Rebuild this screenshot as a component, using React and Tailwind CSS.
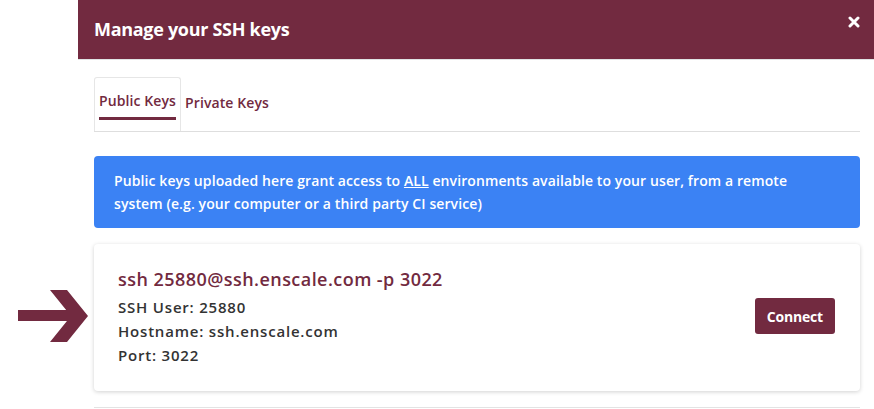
import React from 'react';

const FONT = { fontFamily: '"Open Sans", "Noto Sans", sans-serif' };

const ArrowMark = () => (
    <svg width="70" height="52" viewBox="0 0 70 52" className="shrink-0">
        <rect x="0" y="20" width="58" height="11" fill="#722a40" />
        <polygon points="32,0 49,0 70,26 49,52 32,52 53,26" fill="#722a40" />
    </svg>
);

const CloseIcon = () => (
    <svg width="12" height="12" viewBox="0 0 12 12">
        <path d="M2 2 L10 10 M10 2 L2 10" stroke="#fff" strokeWidth="3" strokeLinecap="round" />
    </svg>
);

export default function App() {
    return (
        <div className="w-[874px] h-[409px] overflow-hidden bg-white flex" style={FONT}>
            {/* left gutter with pointer arrow */}
            <div className="w-[78px] shrink-0 flex flex-col">
                <div className="h-[290px]" />
                <div className="pl-[18px]">
                    <ArrowMark />
                </div>
            </div>

            {/* Modal */}
            <div className="flex-1 flex flex-col">
                <div className="h-[60px] bg-[#722a40] flex items-center justify-between pl-4 pr-[14px] border-b border-[#dfe4e4]">
                    <h2 className="text-white text-[18px] font-bold tracking-[-0.3px]">Manage your SSH keys</h2>
                    <div className="-mt-[16px]">
                        <CloseIcon />
                    </div>
                </div>

                <div className="pl-4 pr-[14px]">
                    {/* Tabs */}
                    <div className="mt-[17px] flex border-b border-[#dedede]">
                        <div className="border border-b-0 border-[#e6e6e6] rounded-t-[3px] px-[3px] pt-[13px] pb-[11px] flex flex-col">
                            <span className="text-[14px] font-semibold text-[#722a40] leading-[20px] px-[1px] tracking-[0.1px]">Public Keys</span>
                            <span className="mt-[6px] h-[3px] bg-[#722a40] mx-[1px]" />
                        </div>
                        <div className="px-[4px] pt-[13px]">
                            <span className="text-[14px] font-semibold text-[#722a40] leading-[20px] tracking-[0.1px]">Private Keys</span>
                        </div>
                    </div>

                    {/* Info */}
                    <div className="mt-[24px] bg-[#3b82f4] rounded-[4px] px-5 py-[13px]">
                        <p className="text-white text-[14px] font-semibold leading-[23px] tracking-[0.1px]">
                            Public keys uploaded here grant access to <span className="underline">ALL</span> environments available to your user, from a remote<br />system (e.g. your computer or a third party CI service)
                        </p>
                    </div>

                    {/* Connection card */}
                    <div className="mt-[16px] rounded-[4px] bg-white shadow-[0_1px_4px_rgba(0,0,0,0.18)] pl-6 pr-[25px] pt-[23px] pb-[24px] flex items-center justify-between">
                        <div className="flex flex-col">
                            <h3 className="text-[18px] font-semibold text-[#722a40] leading-[24px] tracking-[0.45px]">ssh 25880@ssh.enscale.com -p 3022</h3>
                            <div className="mt-[4px] text-[15px] font-semibold text-[#333] leading-[24px] tracking-[0.8px]">
                                <p>SSH User: 25880</p>
                                <p>Hostname: ssh.enscale.com</p>
                                <p>Port: 3022</p>
                            </div>
                        </div>
                        <button className="h-[36px] px-3 rounded-[3px] bg-[#722a40] text-white text-[14px] font-bold mt-[-2px] tracking-[-0.2px]">Connect</button>
                    </div>

                    <div className="mt-[16px] border-t border-[#e3e3e3]" />
                </div>
            </div>
        </div>
    );
}
